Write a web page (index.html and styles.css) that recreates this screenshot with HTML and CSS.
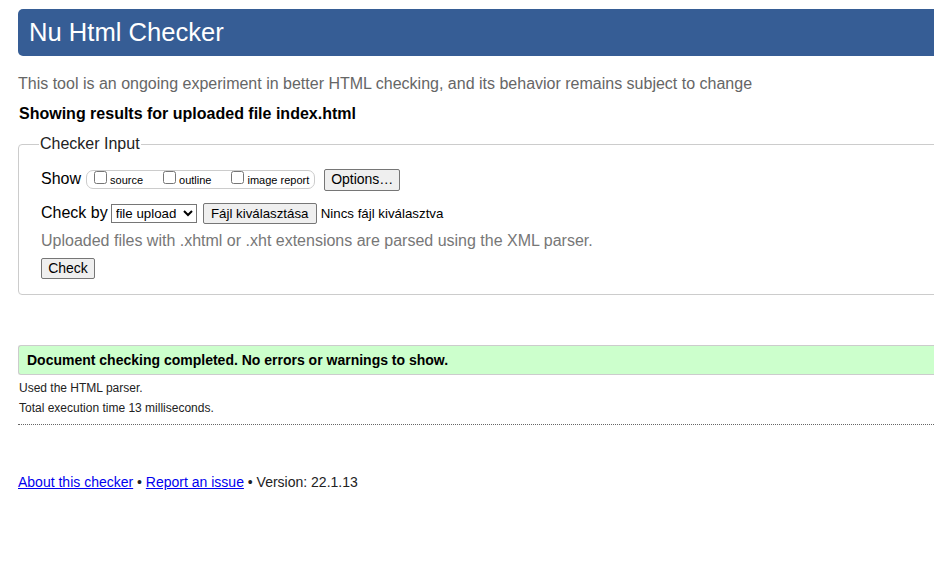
FILE: index.html
```html
<!DOCTYPE html>
<html lang="en">
<head>
<meta charset="utf-8">
<title>Nu Html Checker</title>
<link rel="stylesheet" href="styles.css">
</head>
<body>
<div class="page">
  <h1 class="masthead">Nu Html Checker</h1>
  <p class="intro">This tool is an ongoing experiment in better HTML checking, and its behavior remains subject to change</p>
  <p class="showing">Showing results for uploaded file index.html</p>
  <form class="checker">
    <fieldset class="input-box">
      <legend class="legend">Checker Input</legend>
      <div class="row show-row">
        <span class="row-label">Show</span>
        <span class="opts">
          <label class="opt"><input type="checkbox" class="cb">source</label>
          <label class="opt"><input type="checkbox" class="cb">outline</label>
          <label class="opt"><input type="checkbox" class="cb">image report</label>
        </span>
        <button type="button" class="btn btn-options">Options…</button>
      </div>
      <div class="row by-row">
        <span class="row-label">Check by</span>
        <select class="sel"><option>file upload</option></select>
        <button type="button" class="btn btn-file">Fájl kiválasztása</button>
        <span class="nofile">Nincs fájl kiválasztva</span>
      </div>
      <p class="hint">Uploaded files with .xhtml or .xht extensions are parsed using the XML parser.</p>
      <button type="button" class="btn btn-check">Check</button>
    </fieldset>
  </form>
  <p class="success">Document checking completed. No errors or warnings to show.</p>
  <p class="details">Used the HTML parser.</p>
  <p class="details">Total execution time 13 milliseconds.</p>
  <hr class="sep">
  <p class="footer"><a href="#">About this checker</a> • <a href="#">Report an issue</a> • Version: 22.1.13</p>
</div>
</body>
</html>
```
FILE: styles.css
```css
html { overflow: hidden; }
body {
  margin: 0;
  background: #fff;
  font-family: "Liberation Sans", Arial, sans-serif;
  color: #000;
}
.page {
  width: 960px;
  padding: 9px 0 0 18px;
}
.masthead {
  margin: 0;
  height: 47px;
  box-sizing: border-box;
  padding: 8px 0 0 11px;
  background: #365d95;
  color: #fff;
  font-size: 25.6px;
  font-weight: normal;
  line-height: 30px;
  border-radius: 5px 0 0 5px;
}
.intro {
  margin: 18px 0 0 0;
  font-size: 16px;
  line-height: 20px;
  color: #666;
}
.showing {
  margin: 10px 0 0 1px;
  font-size: 16px;
  font-weight: bold;
  line-height: 20px;
}
.checker { margin: 0; }
.input-box {
  margin: 11px 0 0 0;
  padding: 15px 0 15px 22px;
  border: 1px solid #ccc;
  border-radius: 4px;
}
.legend {
  padding: 0 1px;
  margin-left: -2px;
  font-size: 16px;
  color: #222;
}
.row {
  display: flex;
  align-items: center;
}
.show-row { height: 22px; margin-top: 0; }
.row-label {
  font-size: 16px;
  margin-right: 4px;
}
.show-row .row-label { margin-right: 5px; }
.opts {
  display: flex;
  align-items: center;
  height: 17px;
  border: 1px solid #ccc;
  border-radius: 7px;
  padding: 0 5px 0 4px;
  margin-right: 9px;
  margin-top: 1px;
}
.opt {
  display: flex;
  align-items: center;
  font-size: 11px;
  margin-right: 17px;
}
.opt:last-child { margin-right: 0; }
.cb {
  width: 13px;
  height: 13px;
  margin: 0 3px 0 3px;
  position: relative;
  top: -2px;
}
.btn {
  font-family: "Liberation Sans", Arial, sans-serif;
  font-size: 13.3px;
  color: #000;
  background: #efefef;
  border: 1px solid #767676;
  border-radius: 2px;
  padding: 1px 6px;
  height: 21px;
  line-height: 17px;
}
.btn-options {
  font-size: 14px;
  width: 76px;
  height: 22px;
  margin-top: 1px;
  padding: 0;
}
.by-row { margin-top: 12px; height: 22px; }
.by-row .row-label { margin-right: 3px; }
.sel {
  font-family: "Liberation Sans", Arial, sans-serif;
  font-size: 13.3px;
  height: 19px;
  width: 86px;
  border: 1px solid #767676;
  border-radius: 0;
  padding: 0;
  background: #fff;
  color: #000;
  margin-right: 6px;
}
.btn-file {
  width: 114px;
  height: 21px;
  margin-right: 4px;
  padding: 0;
}
.nofile { font-size: 13.3px; }
.hint {
  margin: 7px 0 0 0;
  font-size: 16px;
  line-height: 20px;
  color: #777;
}
.btn-check {
  margin-top: 7px;
  width: 54px;
  height: 21px;
  padding: 0;
  font-size: 14px;
}
.success {
  margin: 50px 0 0 0;
  height: 30px;
  box-sizing: border-box;
  padding: 6px 0 0 8px;
  background: #ccffcc;
  border: 1px solid #ccc;
  border-right: none;
  border-radius: 3px 0 0 3px;
  font-size: 14px;
  font-weight: bold;
  line-height: 16px;
}
.details {
  margin: 6px 0 0 1px;
  font-size: 12px;
  line-height: 14px;
  color: #222;
}
.sep {
  margin: 9px 0 0 0;
  border: none;
  border-top: 1px dotted #666;
  height: 0;
}
.footer {
  margin: 48px 0 0 0;
  font-size: 14px;
  line-height: 18px;
  color: #222;
}
.footer a { color: #00e; }
```
